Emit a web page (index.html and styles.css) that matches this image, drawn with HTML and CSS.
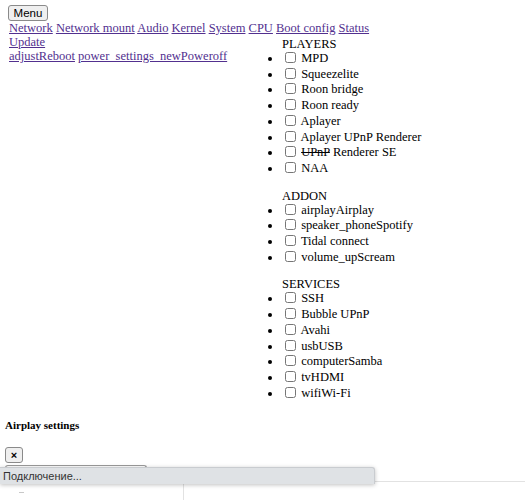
FILE: index.html
```html
<!DOCTYPE html>
<html lang="ru">
<head>
<meta charset="utf-8">
<title>Settings</title>
<link rel="stylesheet" href="styles.css">
</head>
<body>
<div class="page">
  <button class="btn menu-btn">Menu</button>
  <nav class="nav">
    <a href="#">Network</a> <a href="#">Network mount</a> <a href="#">Audio</a> <a href="#">Kernel</a> <a href="#">System</a> <a href="#">CPU</a> <a href="#">Boot config</a> <a href="#">Status</a>
  </nav>
  <div class="columns">
    <div class="left">
      <div><a href="#">Update</a></div>
      <div><a href="#">adjustReboot</a> <a href="#">power_settings_newPoweroff</a></div>
    </div>
    <div class="right">
      <div class="group-title">PLAYERS</div>
      <ul class="opts">
        <li><input type="checkbox"> MPD</li>
        <li><input type="checkbox"> Squeezelite</li>
        <li><input type="checkbox"> Roon bridge</li>
        <li><input type="checkbox"> Roon ready</li>
        <li><input type="checkbox"> Aplayer</li>
        <li><input type="checkbox"> Aplayer UPnP Renderer</li>
        <li><input type="checkbox"> <s>UPnP</s> Renderer SE</li>
        <li><input type="checkbox"> NAA</li>
      </ul>
      <div class="group-title">ADDON</div>
      <ul class="opts">
        <li><input type="checkbox"> airplayAirplay</li>
        <li><input type="checkbox"> speaker_phoneSpotify</li>
        <li><input type="checkbox"> Tidal connect</li>
        <li><input type="checkbox"> volume_upScream</li>
      </ul>
      <div class="group-title">SERVICES</div>
      <ul class="opts">
        <li><input type="checkbox"> SSH</li>
        <li><input type="checkbox"> Bubble UPnP</li>
        <li><input type="checkbox"> Avahi</li>
        <li><input type="checkbox"> usbUSB</li>
        <li><input type="checkbox"> computerSamba</li>
        <li><input type="checkbox"> tvHDMI</li>
        <li><input type="checkbox"> wifiWi-Fi</li>
      </ul>
    </div>
  </div>
  <section class="dialog">
    <h5 class="dialog-title">Airplay settings</h5>
    <button class="btn close-btn">×</button>
    <div class="dialog-body"></div>
  </section>
  <div class="panel">
    <div class="panel-side"><span class="dash"></span></div>
    <div class="panel-main"></div>
  </div>
</div>
<div class="status-bubble">Подключение...</div>
</body>
</html>
```
FILE: styles.css
```css
html, body {
  margin: 0;
  background: #fff;
}

body {
  font-family: "Liberation Serif", "Times New Roman", serif;
  font-size: 12.5px;
  line-height: 14px;
  color: #000;
  overflow: hidden;
  height: 500px;
  position: relative;
}

.page {
  padding: 5px 0 0 8px;
}

a {
  color: #52308f;
  text-decoration: underline;
}

.btn {
  font-family: "Liberation Sans", Arial, sans-serif;
  font-size: 11.5px;
  line-height: 13px;
  color: #000;
  background: #efefef;
  border: 1px solid #8a8a8a;
  border-radius: 3px;
  padding: 1px 6px 1px;
  margin: 0;
}

.menu-btn {
  display: block;
  width: 40px;
  height: 16px;
  padding: 0;
}

.nav {
  margin-left: 1px;
}

.columns {
  display: flex;
  margin-left: 1px;
}

.left {
  width: 273px;
  flex: none;
}

.right {
  flex: 1;
  padding-top: 2px;
}

.group-title {
  margin: 0;
}

.opts {
  margin: 0 0 12px;
  padding: 0;
  list-style: disc;
  line-height: 15.7px;
}

.opts input {
  width: 11px;
  height: 11px;
  margin: 0 2px 0 3px;
  vertical-align: -1px;
}

.dialog {
  margin-left: -3px;
  margin-top: 6px;
}

.dialog-title {
  font-size: 11px;
  font-weight: bold;
  margin: 0 0 15px;
  line-height: 13px;
}

.close-btn {
  display: block;
  width: 18px;
  height: 16px;
  padding: 0;
  font-size: 11px;
  font-weight: bold;
}

.dialog-body {
  width: 140px;
  height: 12px;
  margin-top: 2px;
  border: 1px solid #9a9a9a;
  border-bottom: none;
  border-radius: 3px 3px 0 0;
}

.panel {
  display: flex;
  margin: 3px 0 0 -8px;
  border-top: 1px solid #e2e2e2;
  height: 30px;
}

.panel-side {
  width: 183px;
  border-right: 1px solid #e2e2e2;
  margin-top: 2px;
}

.dash {
  display: block;
  width: 5px;
  height: 1px;
  background: #c8c8c8;
  margin: 8px 0 0 19px;
}

.panel-main {
  flex: 1;
}

/* browser status bubble lying over the page */
.status-bubble {
  position: absolute;
  left: 0;
  top: 467px;
  width: 375px;
  height: 17px;
  box-sizing: border-box;
  padding: 0 0 0 3px;
  background: #dfe2e5;
  border-top: 1px solid #c9ccd0;
  border-right: 1px solid #c9ccd0;
  border-radius: 0 3px 0 0;
  box-shadow: 0 1px 4px rgba(0, 0, 0, 0.25);
  font-family: "Liberation Sans", Arial, sans-serif;
  font-size: 11px;
  line-height: 16px;
  color: #333;
}
```
